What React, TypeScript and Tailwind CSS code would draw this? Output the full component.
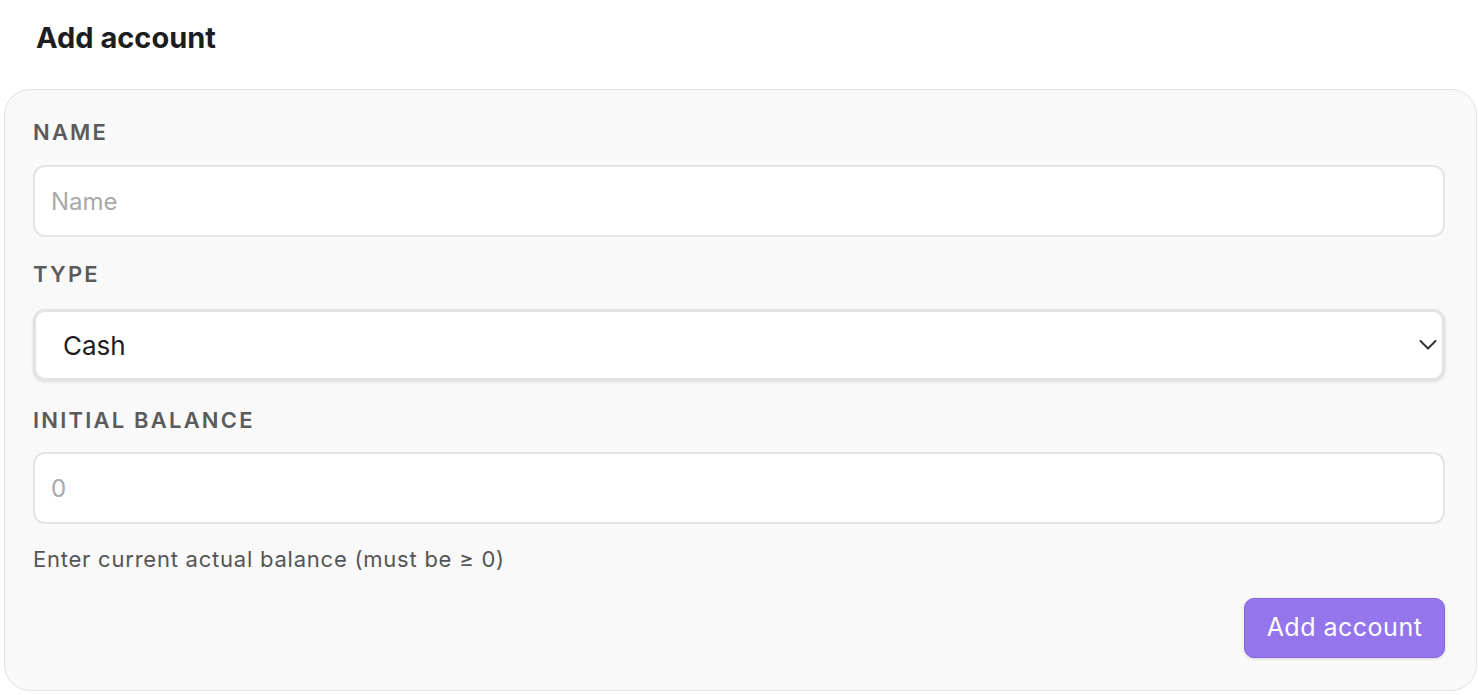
const labelCls =
  "block text-[22px] leading-[29px] font-semibold tracking-[0.1em] uppercase text-[#5b5b5b]";

const inputCls =
  "w-full h-[72px] rounded-[12px] border-2 border-[#e4e4e4] bg-white px-[16px] text-[24px] text-[#1d1d1f] placeholder:text-[#a9a9a9] outline-none";

export default function App() {
  return (
    <div
      className="min-h-screen bg-white pl-[4px] pr-[1px] pb-[4px]"
      style={{ fontFamily: "Inter, 'Noto Sans', sans-serif" }}
    >
      <h1 className="pl-[32px] pt-[14px] pb-[28px] text-[29px] leading-[47px] font-bold text-[#1d1d1f]">
        Add account
      </h1>

      <form className="rounded-[26px] border-[1.5px] border-[#e2e2e2] bg-[#f9f9f9] pl-[28px] pr-[31px] pt-[28px] pb-[32px]">
        <label className={labelCls}>Name</label>
        <input className={`${inputCls} mt-[18px]`} placeholder="Name" />

        <label className={`${labelCls} mt-[23px]`}>Type</label>
        <div className="relative mt-[20px]">
          <select className="w-full h-[72px] appearance-none rounded-[12px] border-[3px] border-[#e3e3e3] bg-white pl-[27px] text-[26px] text-[#1d1d1f] shadow-[0_1px_3px_rgba(0,0,0,0.12)] outline-none">
            <option>Cash</option>
            <option>Bank</option>
            <option>Credit card</option>
          </select>
          {/* select arrow */}
          <svg
            className="pointer-events-none absolute right-[8px] top-1/2 -translate-y-1/2"
            width="18"
            height="11"
            viewBox="0 0 18 11"
            fill="none"
          >
            <path d="M1.5 1.5 L9 9 L16.5 1.5" stroke="#2f2f2f" strokeWidth="2" strokeLinecap="round" strokeLinejoin="round" />
          </svg>
        </div>

        <label className={`${labelCls} mt-[25px]`}>Initial balance</label>
        <input className={`${inputCls} mt-[17px]`} placeholder="0" />
        <p className="mt-[20px] text-[22px] leading-[30px] tracking-[0.035em] text-[#555]">
          Enter current actual balance (must be ≥ 0)
        </p>

        <div className="mt-[24px] flex justify-end">
          <button
            type="button"
            className="h-[60px] w-[201px] rounded-[10px] border-[1.5px] border-[#8766dd] bg-[#9575ec] text-[25px] tracking-[0.02em] text-white shadow-[0_1px_3px_rgba(0,0,0,0.15)]"
          >
            Add account
          </button>
        </div>
      </form>
    </div>
  );
}
